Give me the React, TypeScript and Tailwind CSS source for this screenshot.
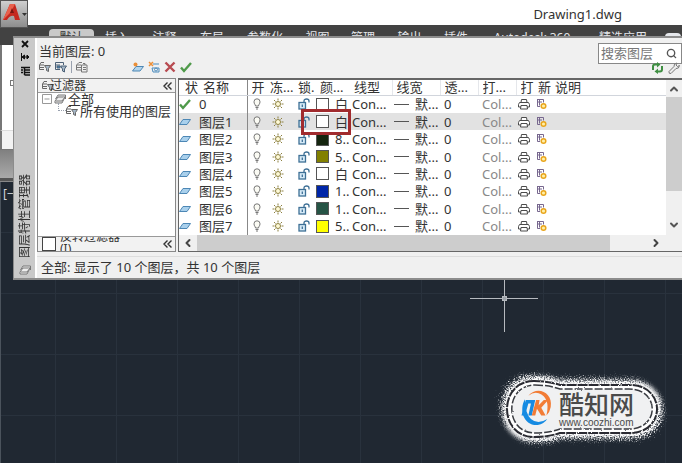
import React from 'react';
import { Search, ChevronUp, ChevronDown, ChevronLeft, ChevronRight } from 'lucide-react';

const tabs = [
  { label: '插入', width: 'w-[46px]' },
  { label: '注释', width: 'w-[49px]' },
  { label: '布局', width: 'w-[46px]' },
  { label: '参数化', width: 'w-[60px]' },
  { label: '视图', width: 'w-[45px]' },
  { label: '管理', width: 'w-[46px]' },
  { label: '输出', width: 'w-[47px]' },
  { label: '插件', width: 'w-[46px]' },
  { label: 'Autodesk 360', width: 'w-[106px]' },
  { label: '精选应用', width: 'w-[76px]' },
];

const columns = [
  { label: '状', width: 'w-[20px]', pad: 'pl-1.5' },
  { label: '名称', width: 'w-[48px]', pad: 'pl-1' },
  { label: '开', width: 'w-[21px]', pad: 'pl-1' },
  { label: '冻...', width: 'w-[28px]', pad: 'pl-0.5' },
  { label: '锁.', width: 'w-[20px]', pad: 'pl-0.5' },
  { label: '颜...', width: 'w-[36px]', pad: 'pl-1' },
  { label: '线型', width: 'w-[40px]', pad: 'pl-0.5' },
  { label: '线宽', width: 'w-[48px]', pad: 'pl-1' },
  { label: '透...', width: 'w-[38px]', pad: 'pl-1' },
  { label: '打...', width: 'w-[38px]', pad: 'pl-1' },
  { label: '打', width: 'w-[18px]', pad: 'pl-1' },
  { label: '新', width: 'w-[17px]', pad: 'pl-1' },
  { label: '说明', width: 'w-auto', pad: 'pl-1' },
];

const layers = [
  { name: '0', color: 'bg-white', label: '白' },
  { name: '图层1', color: 'bg-white', label: '白' },
  { name: '图层2', color: 'bg-[#15250f]', label: '8..' },
  { name: '图层3', color: 'bg-[#828000]', label: '5..' },
  { name: '图层4', color: 'bg-white', label: '白' },
  { name: '图层5', color: 'bg-[#0026a8]', label: '1..' },
  { name: '图层6', color: 'bg-[#265445]', label: '1..' },
  { name: '图层7', color: 'bg-[#ffff00]', label: '5..' },
];

const Check = () => (
  <svg viewBox="0 0 12 12" className="block w-3 h-3" fill="none" stroke="#4f9a4a" strokeWidth="2.4">
    <path d="M1 6.5l3 3.5L11 2" />
  </svg>
);

const Sheet = () => (
  <svg viewBox="0 0 12 12" className="block w-3 h-3">
    <path d="M4 3.5h7.5L8 8.5H.5z" fill="#a9d0ec" stroke="#4d87b5" />
  </svg>
);

const Bulb = () => (
  <svg viewBox="0 0 10 12" className="block w-[10px] h-3" fill="#fbfbf4" stroke="#777" strokeWidth="1">
    <path d="M3.5 8C3.5 6.500 2 6 2 3.800a3 3 0 0 1 6 0C8 6 6.500 6.500 6.500 8zM3.500 9.500h3M4 11h2" />
  </svg>
);

const Sun = () => (
  <svg viewBox="0 0 12 12" className="block w-3 h-3" fill="#fffbd8" stroke="#8d8141" strokeWidth="1">
    <circle cx="6" cy="6" r="2.500" />
    <path d="M6 .5v2M6 9.500v2M.5 6h2M9.500 6h2M2 2l1.500 1.500M8.500 8.500L10 10M10 2L8.500 3.500M3.500 8.500L2 10" />
  </svg>
);

const Lock = () => (
  <svg viewBox="0 0 13 12" className="block w-[13px] h-3" fill="none" stroke="#3e7096" strokeWidth="1.3">
    <rect x="1" y="4.500" width="6.500" height="6.500" fill="#d6eaf7" />
    <path d="M6 4.500V3a2.500 2 0 0 1 5 0v1.500M4.300 6.500v2.500" />
  </svg>
);

const Printer = () => (
  <svg viewBox="0 0 12 12" className="block w-3 h-3" fill="#fff" stroke="#4b4b4b" strokeWidth="1">
    <path d="M3 4.500L3.500 1.500h5L9 4.500M1.500 4.500h9l1 2v2.500h-11V6.500z" />
    <path d="M3 7.500h6l.5 3.500h-7z" />
  </svg>
);

const Viewport = () => (
  <svg viewBox="0 0 11 12" className="block w-[11px] h-3" fill="none">
    <path d="M1 1.500h6.500v3M1.500 1v7.500H4M3.500 1.500v6M1 4h5" stroke="#77678e" />
    <circle cx="7.500" cy="8" r="2.300" fill="#fff0a8" stroke="#e9a51c" strokeWidth="1.500" />
  </svg>
);

const Stack = () => (
  <svg viewBox="0 0 12 12" className="block w-3 h-3" fill="#eee" stroke="#777">
    <path d="M1 8l3-4h7l-3 6H1zM1.500 6L4 2h7.500v4" />
    <path d="M2 8h6l3-4" />
  </svg>
);

const Filter = () => (
  <svg viewBox="0 0 12 12" className="block w-3 h-3" fill="none" stroke="#666">
    <path d="M5 1.500H2L.5 4v4.500H5M1 4h4M1 6.500h4" />
    <path d="M5.500 4.500h6L9.500 7.500v3l-2-1v-2z" fill="#a6b8c8" />
  </svg>
);

const StateFilter = () => (
  <svg viewBox="0 0 12 12" className="block w-3 h-3" fill="none" stroke="#4d6278">
    <path d="M.5 1.500h8V4M.5 1.500v7H5M1 4h4" />
    <path d="M2 5h3v2H2z" fill="#4086bd" />
    <path d="M5.500 5h6l-2 3v3l-2-1V8z" fill="#a6b8c8" />
  </svg>
);

const StateManager = () => (
  <svg viewBox="0 0 12 12" className="block w-3 h-3" fill="none" stroke="#777">
    <path d="M6 1.500H3L.5 4v5H5M1 4h4M1 6.500h4" />
    <path d="M5.500 4h5.500v7H5.500zM7 6.500h3M7 8.500h3M7 2.500h2V4" fill="#eee" />
  </svg>
);

const NewLayer = () => (
  <svg viewBox="0 0 12 12" className="block w-3 h-3">
    <path d="M4 5.500h7.500L8 10H.5z" fill="#b4d5ec" stroke="#4d87b5" />
    <circle cx="3.500" cy="3.500" r="2" fill="#eb8f38" />
  </svg>
);

const NewFrozen = () => (
  <svg viewBox="0 0 12 12" className="block w-3 h-3" fill="none">
    <path d="M1 1l4 4M5 1L1 5" stroke="#eb8f38" strokeWidth="1.500" />
    <path d="M5 3h6M4 7h7v4H5z" stroke="#4b8bbd" />
    <circle cx="8" cy="8.500" r="1.500" stroke="#4b8bbd" />
  </svg>
);

const Cross = () => (
  <svg viewBox="0 0 12 12" className="block w-3 h-3" stroke="#b84b51" strokeWidth="2.400">
    <path d="M1.500 1.500l9 9M10.500 1.500l-9 9" />
  </svg>
);

const Refresh = () => (
  <svg viewBox="0 0 13 12" className="block w-[13px] h-3" fill="none" stroke="#3f8f42" strokeWidth="2">
    <path d="M2 8V4.500Q2 2.500 4 2.500h3M11 4v3.500Q11 9.500 9 9.500H6" />
    <path d="M6 0L9.500 2.500 6 5.500zM7 6.500L3.500 9.500 7 12z" fill="#3f8f42" stroke="none" />
  </svg>
);

const Wrench = () => (
  <svg viewBox="0 0 12 12" className="block w-3 h-3" fill="#eee" stroke="#777">
    <path d="M1 9.500l5-5Q5.500 1.500 9 1L8 3l1.500 1.500L11.500 3.500Q11 7 8 6.500L3 11.500Q.5 12 1 9.500z" />
  </svg>
);

const DoubleLeft = () => (
  <svg viewBox="0 0 10 8" className="w-[10px] h-2" fill="none" stroke="#333" strokeWidth="1.400">
    <path d="M4.500 .5L1 4l3.500 3.500M8.500 .5L5 4l3.500 3.500" />
  </svg>
);

function Ribbon() {
  return (
    <header>
      <div className="flex h-[25px] justify-end bg-white pr-[60px]">
        <h1 className="text-[13px] leading-[28px]">Drawing1.dwg</h1>
      </div>
      <nav className="flex h-5 items-start overflow-hidden bg-[#424242] pl-[49px] text-[12px] leading-[18px] text-gray-200 whitespace-nowrap">
        <button className="mt-1 w-[45px] shrink-0 rounded-t-sm bg-[#c9c9c9] text-[#333] leading-[18px]">默认</button>
        {tabs.map((tab) => (
          <button key={tab.label} className={`mt-1 shrink-0 ${tab.width}`}>{tab.label}</button>
        ))}
        <span className="mt-2 ml-1 h-3 w-4 shrink-0 rounded-sm bg-gray-200" />
      </nav>
      <div className="h-[85px] border-l-2 border-[#777] bg-white pt-[35px] pl-2">
        <span className="block h-1.5 w-2 border border-[#777]" />
      </div>
      <div className="h-5 border-t border-b border-l-2 border-t-[#ddd] border-b-[#777] border-l-[#777] bg-[#f3f3f3]" />
      <div className="h-7 bg-linear-to-b from-[#808080] to-[#aaa]" />
      <div className="h-1 border-b border-[#888] bg-[#555]" />
    </header>
  );
}

function FilterPane() {
  return (
    <aside className="flex w-[139px] shrink-0 flex-col border border-[#888] bg-white">
      <div className="flex h-[14px] items-center justify-between overflow-hidden border-b border-[#999] bg-[#f2f2f2] pl-1">
        <span className="flex items-center">
          <Filter />
          <span className="-ml-1 text-[12px] leading-[14px]">过滤器</span>
        </span>
        <button aria-label="折叠过滤器" className="flex pr-0.5"><DoubleLeft /></button>
      </div>
      <ul className="flex-1 pl-1 leading-[12px]">
        <li>
          <div className="flex items-center gap-0.5">
            <svg viewBox="0 0 10 10" className="w-[10px] h-[10px]" fill="#fff" stroke="#999">
              <path d="M.5 .5h9v9h-9zM2.500 5h5" />
            </svg>
            <Stack />
            <span>全部</span>
          </div>
          <ul className="pl-4">
            <li className="flex items-center">
              <span className="-mt-2 h-2 w-2 border-b border-l border-dotted border-gray-400" />
              <Filter />
              <span className="ml-0.5 whitespace-nowrap">所有使用的图层</span>
            </li>
          </ul>
        </li>
      </ul>
      <div className="flex h-[15px] items-center overflow-hidden border-t border-[#999] bg-[#f2f2f2] pl-1">
        <input id="invert" type="checkbox" className="h-[14px] w-[14px] shrink-0 appearance-none border border-[#444] bg-white" />
        <label htmlFor="invert" className="ml-1 h-[14px] flex-1 overflow-hidden text-[12px] leading-[12px]">
          <span className="-mt-1.5 block">反转过滤器<br />(I)</span>
        </label>
        <button aria-label="折叠" className="flex pr-0.5"><DoubleLeft /></button>
      </div>
    </aside>
  );
}

function LayerTable() {
  return (
    <table className="h-[155px] w-full table-fixed border-collapse whitespace-nowrap leading-[16px]">
      <thead>
        <tr className="h-[15px]">
          {columns.map((column, index) => (
            <th
              key={index}
              scope="col"
              className={`${column.width} ${column.pad} overflow-hidden border-b border-b-gray-300 p-0 text-left font-normal ${index === 1 ? 'border-r border-r-[#888]' : ''} ${index > 5 && index < 10 ? 'border-r border-r-gray-200' : ''}`}
            >
              <span className="block h-[14px] overflow-hidden leading-[14px]">{column.label}</span>
            </th>
          ))}
        </tr>
      </thead>
      <tbody>
        {layers.map((layer, index) => (
          <tr key={layer.name} className={index === 1 ? 'bg-[#e2e2e2]' : ''}>
            <td className="p-0">{index === 0 ? <Check /> : <Sheet />}</td>
            <td className="border-r border-[#888] p-0">{layer.name}</td>
            <td className="p-0 pl-1"><Bulb /></td>
            <td className="p-0 pl-1"><Sun /></td>
            <td className="p-0 pl-0.5"><Lock /></td>
            <td className="p-0">
              <span className="flex items-center gap-1.5">
                <span className={`h-[13px] w-[13px] shrink-0 border border-[#555] ${layer.color}`} />
                <span>{layer.label}</span>
              </span>
            </td>
            <td className="p-0">Con...</td>
            <td className="p-0">
              <span className="flex items-center gap-1.5 pl-0.5">
                <span className="w-[15px] border-t border-[#555]" />
                <span>默...</span>
              </span>
            </td>
            <td className="p-0 pl-1">0</td>
            <td className="p-0 pl-1 text-[#888]">Col...</td>
            <td className="p-0 pl-0.5"><Printer /></td>
            <td className="p-0 pl-0.5"><Viewport /></td>
            <td className="p-0" />
          </tr>
        ))}
      </tbody>
    </table>
  );
}

function LayerManager() {
  return (
    <section className="absolute top-9 right-0 left-[13px] flex border-t-2 border-b-2 border-l border-[#8c8c8c] bg-[#f0f0f0]">
      <div className="flex w-[21px] shrink-0 flex-col items-center bg-[#c9c9c9]">
        <button aria-label="关闭" className="flex">
          <svg viewBox="0 0 8 8" className="m-0.5 w-2 h-2" stroke="#111" strokeWidth="1.800"><path d="M1 1l6 6M7 1L1 7" /></svg>
        </button>
        <button aria-label="自动隐藏" className="flex">
          <svg viewBox="0 0 10 10" className="mt-0.5 w-[10px] h-[10px]" fill="#111" stroke="#111"><path d="M1.500 1v8M2 5h7M4.500 3v4L2 5zM7 3v4l2-2z" /></svg>
        </button>
        <button aria-label="特性" className="flex">
          <svg viewBox="0 0 10 10" className="mt-1 w-[10px] h-[10px]" fill="none" stroke="#111" strokeWidth="1.500"><path d="M1 1.500h9M1 4h2M1 6.500h2M4.500 4H10M4.500 6.500H10M4.500 9H10M4.500 2v7" /></svg>
        </button>
        <h2 className="mt-auto mb-1.5 rotate-180 text-[12px] leading-[16px] whitespace-nowrap [writing-mode:vertical-rl] [text-orientation:sideways]">图层特性管理器</h2>
        <div className="mb-0.5"><Stack /></div>
      </div>

      <div className="min-w-0 flex-1 border-l-2 border-white">
        <div className="flex h-10 justify-between pl-0.5">
          <div>
            <p className="pt-1 leading-[18px]">当前图层: 0</p>
            <div className="flex items-center pt-px">
              <button aria-label="新建特性过滤器" className="mr-1"><Filter /></button>
              <button aria-label="新建组过滤器"><StateFilter /></button>
              <span className="mx-1 h-3 w-px bg-gray-400" />
              <button aria-label="图层状态管理器" className="mr-11"><StateManager /></button>
              <button aria-label="新建图层" className="mr-1"><NewLayer /></button>
              <button aria-label="新建冻结图层" className="mr-1"><NewFrozen /></button>
              <button aria-label="删除图层" className="mr-1"><Cross /></button>
              <button aria-label="置为当前"><Check /></button>
            </div>
          </div>
          <div className="w-[84px] pt-[5px]">
            <label className="flex h-[21px] items-center border border-[#888] bg-white pr-1 pl-0.5">
              <input type="text" aria-label="搜索图层" placeholder="搜索图层" className="min-w-0 flex-1 outline-none placeholder:text-[#777]" />
              <Search className="h-[11px] w-[11px] shrink-0 text-[#555]" strokeWidth={3} />
            </label>
            <div className="-mt-0.5 flex justify-end gap-1 pr-0.5">
              <button aria-label="刷新"><Refresh /></button>
              <button aria-label="设置"><Wrench /></button>
            </div>
          </div>
        </div>

        <div className="flex gap-0.5">
          <FilterPane />
          <div className="relative min-w-0 flex-1 border-t-2 border-b border-l border-[#666] bg-white">
            <div className="flex">
              <div className="min-w-0 flex-1"><LayerTable /></div>
              <div className="flex w-4 shrink-0 flex-col items-center bg-[#f0f0f0]">
                <button aria-label="向上滚动" className="flex h-[17px] items-center"><ChevronUp className="h-3 w-3" strokeWidth={4} color="#555" /></button>
                <span className="h-[94px] w-full bg-[#cdcdcd]" />
                <button aria-label="向下滚动" className="mt-auto mb-1 flex"><ChevronDown className="h-3 w-3" strokeWidth={4} color="#555" /></button>
              </div>
            </div>
            <div className="flex h-4 items-center bg-[#f0f0f0]">
              <button aria-label="向左滚动" className="flex w-[18px] justify-center"><ChevronLeft className="h-3 w-3" strokeWidth={4} color="#444" /></button>
              <span className="h-full w-[413px] bg-[#cdcdcd]" />
              <button aria-label="向右滚动" className="mr-5 ml-auto flex"><ChevronRight className="h-3 w-3" strokeWidth={4} color="#444" /></button>
            </div>
            <div className="pointer-events-none absolute top-[29px] left-[122px] h-[26px] w-[50px] border-[3px] border-[#a12b2e]" />
          </div>
        </div>
        <footer className="mt-1 border-t border-[#ddd] pl-1 leading-[21px]">全部: 显示了 10 个图层，共 10 个图层</footer>
      </div>
    </section>
  );
}

function Watermark() {
  return (
    <div className="absolute right-[12px] bottom-[14px] h-[80px] w-[172px]">
      <svg viewBox="0 0 172 80" className="absolute inset-0 h-full w-full overflow-visible" fill="none">
        <defs>
          <filter id="halo" x="-15%" y="-25%" width="130%" height="150%">
            <feGaussianBlur in="SourceGraphic" stdDeviation="2" result="soft" />
            <feTurbulence type="fractalNoise" baseFrequency="0.8" numOctaves="2" result="noise" />
            <feDisplacementMap in="soft" in2="noise" scale="14" />
          </filter>
          <filter id="rough" x="-5%" y="-5%" width="110%" height="110%">
            <feTurbulence type="fractalNoise" baseFrequency="0.6" numOctaves="2" result="noise" />
            <feDisplacementMap in="SourceGraphic" in2="noise" scale="2" />
          </filter>
        </defs>
        <path d="M36 12Q50 12 62 16H132C168 16 168 64 132 64H62Q50 68 36 68C0 68 0 12 36 12z" fill="#fff" stroke="#fff" strokeWidth="10" filter="url(#halo)" />
        <g filter="url(#rough)">
          <path d="M36 12Q50 12 62 16H132C168 16 168 64 132 64H62Q50 68 36 68C0 68 0 12 36 12z" fill="#fff" stroke="#292b30" strokeWidth="2" strokeDasharray="10 1" />
          <path d="M37 16Q50 16 62 20H131C162 20 162 60 131 60H62Q50 64 37 64C6 64 6 16 37 16z" fill="#f0f1f2" stroke="#393b40" strokeWidth="1.500" strokeDasharray="8 2" />
        </g>
        <g transform="translate(8 7) scale(.86)">
          <path d="M26 23C36 11 55 19 52 36Q51 42 47 46Q52 25 38 20Q32 18 26 23z" fill="#f27c35" />
          <path d="M22 27C15 39 20 58 37 57Q44 56 48 50Q37 57 29 50Q22 43 22 27z" fill="#168be2" />
          <path d="M23 28h11l-4 18h-4l3-14h-3l-4 14h-4z" fill="#168be2" />
          <path d="M35 28h4l-1 6 6-6h5l-8 9 5 9h-5l-5-8-2 8h-4z" fill="#f27c35" />
        </g>
      </svg>
      <div className="relative pt-[22px] pl-[61px] text-[#4a4a4a]">
        <p className="text-[25px] leading-[26px] font-medium whitespace-nowrap">酷知网</p>
        <p className="font-['Liberation_Sans',sans-serif] text-[10px] leading-[12px] whitespace-nowrap">www.coozhi.com</p>
      </div>
    </div>
  );
}

export default function App() {
  return (
    <div className="relative min-h-screen overflow-hidden bg-[#202832] text-[13px] text-[#333] font-['Noto_Sans','Noto_Sans_CJK_SC',sans-serif]">
      <Ribbon />
      <main className="flex min-h-[281px] flex-col border-l border-[#4b535c] bg-[linear-gradient(to_right,#29323d_1px,transparent_1px),linear-gradient(to_bottom,#29323d_1px,transparent_1px)] bg-[size:61px_61px] bg-[position:54px_50px]">
        <span className="mt-1.5 ml-0.5 text-[12px] leading-[12px] text-gray-300">[−]</span>
      </main>
      <button aria-label="应用程序菜单" className="absolute top-0 left-0 flex h-7 w-7 items-center border border-[#555] bg-linear-to-b from-[#d0d0d0] to-[#8d8d8d]">
        <svg viewBox="0 0 26 26" className="h-[26px] w-[26px]">
          <path d="M2 19L9 3h5l5 16h-5l-1-4q-4-1-7 4z" fill="#c5281f" />
          <path d="M9 3h5l-4 8-8 8z" fill="#e8604c" />
          <path d="M11 7l2 5h-4z" fill="#771612" />
          <path d="M21 12h5l-2.500 3z" fill="#333" />
        </svg>
      </button>
      <LayerManager />
      <svg viewBox="0 0 68 68" className="absolute top-[264px] left-[470px] h-[68px] w-[68px]" stroke="#b6babf" strokeWidth="1">
        <path d="M34.500 16v52M0 34.500h68" />
        <rect x="32.500" y="32.500" width="4" height="4" fill="#9da3aa" />
      </svg>
      <Watermark />
    </div>
  );
}
